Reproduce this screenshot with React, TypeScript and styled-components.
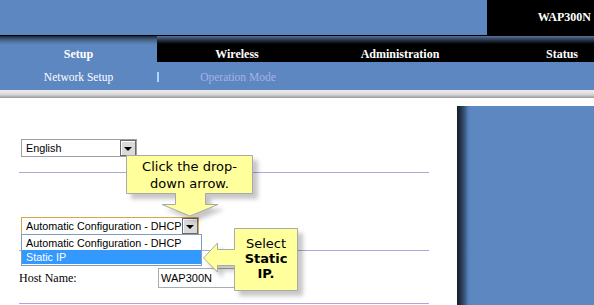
import React from "react";
import styled, { createGlobalStyle } from "styled-components";

const Global = createGlobalStyle`
  html, body { margin: 0; padding: 0; background: #fff; }
  body { width: 594px; height: 305px; overflow: hidden; }
`;

const BLUE = "#5d87c1";

const Page = styled.div`
  width: 594px;
  height: 305px;
  display: flex;
  flex-direction: column;
  overflow: hidden;
  font-family: "Liberation Serif", "Times New Roman", serif;
`;

const TopBar = styled.div`
  height: 35px;
  background: ${BLUE};
  border-bottom: 1px solid #000;
  display: flex;
  justify-content: flex-end;
`;

const Brand = styled.div`
  width: 107px;
  background: #000;
  color: #fff;
  font-weight: bold;
  font-size: 12px;
  line-height: 35px;
  text-align: right;
  padding-right: 3px;
  box-sizing: border-box;
`;

const NavRow = styled.div`
  height: 26px;
  display: grid;
  grid-template-columns: 157px 160px 166px 1fr;
`;

const Tab = styled.div<{ $active?: boolean; $align?: string; $pr?: number }>`
  background: ${(p) =>
    p.$active
      ? `linear-gradient(to bottom, #1c2838 0px, #3a557a 3px, #52789f 6px, ${BLUE} 9px)`
      : `linear-gradient(to bottom, #56739a 0px, #34465f 3px, #141a22 6px, #000 8px)`};
  color: #fff;
  font-weight: bold;
  font-size: 12px;
  line-height: 16px;
  padding-top: 10px;
  text-align: ${(p) => p.$align || "center"};
  padding-right: ${(p) => p.$pr || 0}px;
`;

const SubNav = styled.div`
  height: 28px;
  background: ${BLUE};
  display: flex;
  align-items: center;
  padding-top: 2px;
  box-sizing: border-box;
`;

const SubLink = styled.div<{ $active?: boolean; $w: number }>`
  width: ${(p) => p.$w}px;
  text-align: center;
  font-size: 11.5px;
  color: ${(p) => (p.$active ? "#ffffff" : "#a9b0e6")};
`;

const Sep = styled.div`
  width: 2px;
  height: 10px;
  background: #a8d8ff;
`;

const GrayBar = styled.div`
  height: 8px;
  background: linear-gradient(to bottom, #eaeaea 0px, #e2e2e2 3px, #d0d0d0 5px, #a8a8a8 7px, #9a9a9a 8px);
`;

const Main = styled.div`
  flex: 1;
  display: flex;
`;

const Content = styled.div`
  width: 457px;
  position: relative;
  padding: 41px 0 0 19px;
  box-sizing: border-box;
`;

const SidePanel = styled.div`
  flex: 1;
  margin-top: 8px;
  background: linear-gradient(to right, #141c28 0px, #26354c 4px, #3e5a80 8px, #5280b8 11px, ${BLUE} 14px);
`;

const Divider = styled.div<{ $mt: number }>`
  width: 410px;
  height: 1px;
  background: #aca8dc;
  margin-top: ${(p) => p.$mt}px;
`;

const SelectWrap = styled.div<{ $w: number; $mt?: number; $focus?: boolean }>`
  position: relative;
  width: ${(p) => p.$w}px;
  height: 18px;
  margin-left: 2px;
  margin-top: ${(p) => p.$mt || 0}px;
  box-sizing: border-box;
  border: 1px solid ${(p) => (p.$focus ? "#d9a44a" : "#a0a0a0")};
  background: #fff;
  display: flex;
  align-items: center;
  justify-content: space-between;
  font-family: "Liberation Sans", Arial, sans-serif;
  font-size: 10.8px;
  color: #000;
  white-space: nowrap;
`;

const SelectText = styled.span`
  padding-left: 4px;
  line-height: 16px;
  white-space: nowrap;
  overflow: hidden;
  flex: 1;
`;

const ArrowBtn = styled.div`
  flex: none;
  width: 16px;
  height: 16px;
  box-sizing: border-box;
  border: 1px solid #6a6a6a;
  box-shadow: inset 1px 1px 0 #ffffff;
  background: #dadada;
  display: flex;
  align-items: center;
  justify-content: center;
`;

const Tri = styled.div`
  width: 0;
  height: 0;
  border-left: 4px solid transparent;
  border-right: 4px solid transparent;
  border-top: 4px solid #000;
  margin-top: 2px;
`;

const DropList = styled.div`
  position: absolute;
  left: -1px;
  top: 16px;
  width: 179px;
  border: 1px solid #7f9db9;
  background: #fff;
  z-index: 2;
  padding: 1px 0;
`;

const DropItem = styled.div<{ $sel?: boolean }>`
  height: 14px;
  line-height: 14px;
  padding-left: 4px;
  background: ${(p) => (p.$sel ? "#3399ff" : "#fff")};
  color: ${(p) => (p.$sel ? "#fff" : "#000")};
`;

const HostRow = styled.div`
  margin-top: 17px;
  height: 20px;
  display: flex;
  align-items: center;
`;

const Label = styled.div`
  width: 139px;
  font-size: 12px;
  color: #000;
`;

const TextInput = styled.div`
  width: 100px;
  height: 20px;
  box-sizing: border-box;
  border: 1px solid #a5acb2;
  font-family: "Liberation Sans", Arial, sans-serif;
  font-size: 11px;
  line-height: 18px;
  padding-left: 2px;
`;

const CalloutBox = styled.div<{ $x: number; $y: number; $w: number; $h: number }>`
  position: absolute;
  left: ${(p) => p.$x}px;
  top: ${(p) => p.$y}px;
  width: ${(p) => p.$w}px;
  height: ${(p) => p.$h}px;
  z-index: 5;
`;

const CalloutSvg = styled.svg`
  position: absolute;
  left: 0;
  top: 0;
  overflow: visible;
  filter: drop-shadow(5px 5px 2px rgba(0, 0, 0, 0.22));
`;

const CalloutText = styled.div<{ $x: number; $w: number; $pt: number; $lh: number }>`
  position: absolute;
  left: ${(p) => p.$x}px;
  top: 0;
  width: ${(p) => p.$w}px;
  padding-top: ${(p) => p.$pt}px;
  line-height: ${(p) => p.$lh}px;
  text-align: center;
  font-family: "DejaVu Sans", Verdana, sans-serif;
  font-size: 13px;
  color: #000;
`;

const Bold = styled.b`
  font-weight: bold;
`;

export default function App() {
  return (
    <>
      <Global />
      <Page>
        <TopBar>
          <Brand>WAP300N</Brand>
        </TopBar>
        <NavRow>
          <Tab $active>Setup</Tab>
          <Tab>Wireless</Tab>
          <Tab>Administration</Tab>
          <Tab $align="right" $pr={16}>Status</Tab>
        </NavRow>
        <SubNav>
          <SubLink $active $w={157}>Network Setup</SubLink>
          <Sep />
          <SubLink $w={158}>Operation Mode</SubLink>
        </SubNav>
        <GrayBar />
        <Main>
          <Content>
            <SelectWrap $w={116}>
              <SelectText>English</SelectText>
              <ArrowBtn><Tri /></ArrowBtn>
            </SelectWrap>
            <Divider $mt={15} />
            <SelectWrap $w={178} $mt={44} $focus>
              <SelectText>Automatic Configuration - DHCP</SelectText>
              <ArrowBtn><Tri /></ArrowBtn>
              <DropList>
                <DropItem>Automatic Configuration - DHCP</DropItem>
                <DropItem $sel>Static IP</DropItem>
              </DropList>
            </SelectWrap>
            <Divider $mt={15} />
            <HostRow>
              <Label>Host Name:</Label>
              <TextInput>WAP300N</TextInput>
            </HostRow>
            <Divider $mt={15} />

            <CalloutBox $x={126} $y={57} $w={128} $h={62}>
              <CalloutSvg width="128" height="62" viewBox="0 0 128 62">
                <path
                  d="M0.5,0.5 H126.5 V38.5 H79.5 V49.5 H92 L64,61 L36,49.5 H49.5 V38.5 H0.5 Z"
                  fill="#ffff9c"
                  stroke="#a9a9a9"
                  strokeWidth="1"
                />
              </CalloutSvg>
              <CalloutText $x={0} $w={127} $pt={3} $lh={17}>
                Click the drop-
                <br />
                down arrow.
              </CalloutText>
            </CalloutBox>

            <CalloutBox $x={203} $y={130} $w={95} $h={63}>
              <CalloutSvg width="95" height="63" viewBox="0 0 95 63">
                <path
                  d="M31.5,0.5 H94.5 V62.5 H31.5 V37.5 H14.5 V44 L0.5,30 L14.5,15 V21.5 H31.5 Z"
                  fill="#ffff9c"
                  stroke="#a9a9a9"
                  strokeWidth="1"
                />
              </CalloutSvg>
              <CalloutText $x={31} $w={64} $pt={8} $lh={15}>
                Select
                <br />
                <Bold>Static</Bold>
                <br />
                <Bold>IP.</Bold>
              </CalloutText>
            </CalloutBox>
          </Content>
          <SidePanel />
        </Main>
      </Page>
    </>
  );
}
